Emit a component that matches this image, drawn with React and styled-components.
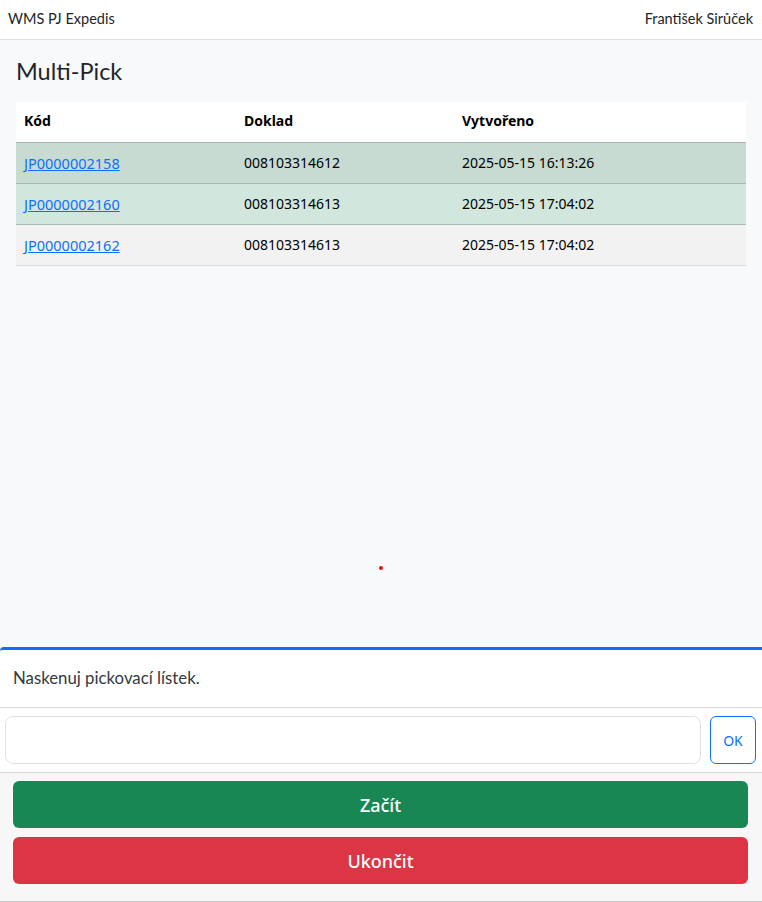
import React from "react";
import styled, { createGlobalStyle } from "styled-components";

const Global = createGlobalStyle`
  html, body { margin: 0; padding: 0; height: 100%; }
  body {
    font-family: Lato, "Noto Sans", sans-serif;
    color: #212529;
    background: #f8f9fa;
  }
  #root { min-height: 100%; }
  * { box-sizing: border-box; }
`;

const Page = styled.div`
  display: flex;
  flex-direction: column;
  height: 902px;
`;

const Header = styled.header`
  height: 40px;
  flex: none;
  background: #fff;
  border-bottom: 1px solid #dee2e6;
  display: flex;
  align-items: center;
  justify-content: space-between;
  padding: 0 9px 2px 8px;
  font-size: 14.5px;
  color: #212529;
`;

const Main = styled.main`
  flex: 1;
  padding: 14px 16px 0;
  position: relative;
`;

const Title = styled.h1`
  margin: 0 0 14px;
  font-size: 23.5px;
  font-weight: 400;
  line-height: 34px;
  color: #212529;
`;

const Table = styled.table`
  width: 100%;
  border-collapse: collapse;
  font-family: "Noto Sans", sans-serif;
  font-size: 14px;
  color: #000;
`;

const Th = styled.th`
  text-align: left;
  font-weight: 700;
  height: 40px;
  padding: 0 8px 2px;
  background: #fff;
  border-bottom: 1px solid #a3b5ac;
  width: ${(p) => p.$w || "auto"};
`;

const Row = styled.tr`
  background: ${(p) => p.$bg};
  border-bottom: 1px solid ${(p) => p.$line};
`;

const Td = styled.td`
  height: 41px;
  padding: 0 8px;
`;

const CodeLink = styled.a`
  color: #0d6efd;
  text-decoration: underline;
  font-size: 14.5px;
`;

const Dot = styled.span`
  position: absolute;
  left: 379px;
  top: 526px;
  width: 4px;
  height: 4px;
  border-radius: 50%;
  background: #f01010;
`;

const Footer = styled.footer`
  flex: none;
  border-top: 3px solid #0d6efd;
  border-top-left-radius: 4px;
  border-bottom: 1px solid #c8c8c8;
  background: #fff;
  display: flex;
  flex-direction: column;
`;

const Message = styled.div`
  height: 58px;
  padding: 0 13px 3px;
  display: flex;
  align-items: center;
  font-size: 16.8px;
  color: #343a40;
  border-bottom: 1px solid #d6d6d6;
`;

const InputRow = styled.div`
  display: flex;
  gap: 9px;
  padding: 8px 6px 8px 5px;
  border-bottom: 1px solid #d6d6d6;
`;

const Input = styled.input`
  flex: 1;
  height: 48px;
  border: 1px solid #dee2e6;
  border-radius: 8px;
  background: #fff;
  outline: none;
`;

const OkButton = styled.button`
  width: 46px;
  height: 48px;
  border: 1px solid #0d6efd;
  border-radius: 6px;
  background: #fff;
  color: #0d6efd;
  font-family: "Noto Sans", sans-serif;
  font-size: 14px;
  padding: 0;
`;

const Actions = styled.div`
  background: #f7f7f7;
  padding: 8px 14px 17px 13px;
  display: flex;
  flex-direction: column;
  gap: 9px;
`;

const ActionButton = styled.button`
  height: 47px;
  border: none;
  border-radius: 6px;
  background: ${(p) => p.$bg};
  color: #fff;
  font-family: "Noto Sans", sans-serif;
  font-size: 18px;
  font-weight: 500;
`;

const rows = [
  { code: "JP0000002158", doc: "008103314612", date: "2025-05-15 16:13:26", bg: "#c7dbd2", line: "#a3b5ac" },
  { code: "JP0000002160", doc: "008103314613", date: "2025-05-15 17:04:02", bg: "#d1e7dd", line: "#a8bab2" },
  { code: "JP0000002162", doc: "008103314613", date: "2025-05-15 17:04:02", bg: "#f2f2f2", line: "#dcdcdc" },
];

export default function App() {
  return (
    <>
      <Global />
      <Page>
        <Header>
          <span>WMS PJ Expedis</span>
          <span>František Sirůček</span>
        </Header>
        <Main>
          <Title>Multi-Pick</Title>
          <Table>
            <thead>
              <tr>
                <Th $w="220px">Kód</Th>
                <Th $w="218px">Doklad</Th>
                <Th>Vytvořeno</Th>
              </tr>
            </thead>
            <tbody>
              {rows.map((r) => (
                <Row key={r.code} $bg={r.bg} $line={r.line}>
                  <Td>
                    <CodeLink href="#">{r.code}</CodeLink>
                  </Td>
                  <Td>{r.doc}</Td>
                  <Td>{r.date}</Td>
                </Row>
              ))}
            </tbody>
          </Table>
          <Dot />
        </Main>
        <Footer>
          <Message>Naskenuj pickovací lístek.</Message>
          <InputRow>
            <Input />
            <OkButton>OK</OkButton>
          </InputRow>
          <Actions>
            <ActionButton $bg="#198754">Začít</ActionButton>
            <ActionButton $bg="#dc3545">Ukončit</ActionButton>
          </Actions>
        </Footer>
      </Page>
    </>
  );
}
